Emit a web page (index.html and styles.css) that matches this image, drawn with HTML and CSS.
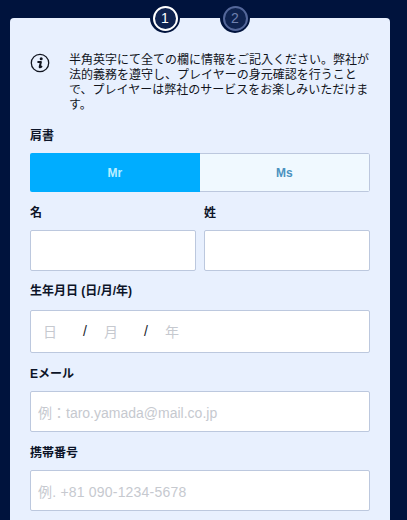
FILE: index.html
```html
<!DOCTYPE html>
<html lang="ja">
<head>
<meta charset="utf-8">
<title>登録</title>
<link rel="stylesheet" href="styles.css">
</head>
<body>
<div class="page">
  <div class="stepper">
    <div class="step step-active"><span class="step-num">1</span></div>
    <div class="step step-idle"><span class="step-num">2</span></div>
  </div>
  <form class="card">
    <div class="notice">
      <svg class="notice-icon" viewBox="0 0 20 20" width="20" height="20" aria-hidden="true">
        <circle cx="10" cy="10" r="8.7" fill="none" stroke="#10141f" stroke-width="1.3"/>
        <circle cx="11.2" cy="5.8" r="1.5" fill="#10141f"/>
        <path d="M8.2 9.1h2.7l-1.2 4.7c-.1.6.4.7 1.7-.2" fill="none" stroke="#10141f" stroke-width="2" stroke-linecap="round" stroke-linejoin="round"/>
      </svg>
      <p class="notice-text">半角英字にて全ての欄に情報をご記入ください。弊社が法的義務を遵守し、プレイヤーの身元確認を行うことで、プレイヤーは弊社のサービスをお楽しみいただけます。</p>
    </div>
    <div class="label label-title">肩書</div>
    <div class="toggle">
      <div class="toggle-btn toggle-on">Mr</div>
      <div class="toggle-btn toggle-off">Ms</div>
    </div>
    <div class="name-row">
      <div class="name-col">
        <div class="label">名</div>
        <div class="field field-name"></div>
      </div>
      <div class="name-col">
        <div class="label">姓</div>
        <div class="field field-name"></div>
      </div>
    </div>
    <div class="label label-dob">生年月日 (日/月/年)</div>
    <div class="field field-dob">
      <span class="dob-part">日</span><span class="dob-sep">/</span>
      <span class="dob-part">月</span><span class="dob-sep">/</span>
      <span class="dob-part">年</span>
    </div>
    <div class="label label-contact">Eメール</div>
    <div class="field field-text">例：taro.yamada@mail.co.jp</div>
    <div class="label label-contact">携帯番号</div>
    <div class="field field-text field-phone">例. +81 090-1234-5678</div>
  </form>
</div>
</body>
</html>
```
FILE: styles.css
```css
* { box-sizing: border-box; }
html, body { margin: 0; height: 100%; }
body {
  background: #00133d;
  font-family: "Liberation Sans", "Noto Sans CJK JP", sans-serif;
  overflow: hidden;
}
.page { width: 380px; margin-left: 10px; padding-top: 3px; }
.stepper {
  display: flex;
  justify-content: center;
  gap: 40px;
  height: 30px;
  position: relative;
  z-index: 1;
}
.step {
  width: 30px;
  height: 30px;
  border-radius: 50%;
  background: #00133d;
  display: flex;
  align-items: center;
  justify-content: center;
}
.step-num {
  width: 25px;
  height: 25px;
  border-radius: 50%;
  display: flex;
  align-items: center;
  justify-content: center;
  font-size: 14px;
  background: #0f2350;
}
.step-active .step-num { border: 2px solid #fff; color: #fff; }
.step-idle .step-num { border: 2px solid #54679a; color: #6f81b0; }
.card {
  margin-top: -15px;
  height: 520px;
  background: #e8f0fe;
  border-radius: 4px;
  padding: 33px 20px 0;
}
.notice { display: flex; align-items: flex-start; }
.notice-icon { flex: none; width: 20px; height: 20px; margin-top: 2px; }
.notice-text {
  margin: 0 0 0 19px;
  font-size: 12px;
  line-height: 15px;
  color: #11141c;
  font-family: "Noto Sans CJK JP", sans-serif;
}
.label {
  font-size: 12px;
  line-height: 16px;
  font-weight: 700;
  color: #0c1428;
}
.label-title { margin-top: 17px; }
.toggle {
  display: flex;
  height: 39px;
  margin-top: 9px;
  border-radius: 2px;
  overflow: hidden;
}
.toggle-btn {
  flex: 1;
  display: flex;
  align-items: center;
  justify-content: center;
  font-size: 12px;
  font-weight: 700;
}
.toggle-on { background: #00adff; color: #b9efff; }
.toggle-off {
  background: #f0f9ff;
  color: #4a92c0;
  border: 1px solid #bcc8de;
  border-left: 0;
  border-radius: 0 2px 2px 0;
}
.name-row { display: flex; gap: 8px; margin-top: 13px; }
.name-col { flex: 1; min-width: 0; }
.field {
  background: #fff;
  border: 1px solid #bcc8de;
  border-radius: 2px;
  display: flex;
  align-items: center;
  padding: 0 7px;
  font-size: 14px;
  color: #c6c9cf;
}
.field-name { height: 41px; margin-top: 9px; }
.label-dob { margin-top: 12px; }
.field-dob {
  height: 43px;
  margin-top: 11px;
  padding-left: 12px;
  padding-bottom: 1px;
}
.dob-part { width: 40px; }
.dob-sep { width: 21px; color: #20242c; }
.label-contact { margin-top: 13px; }
.field-text { height: 41px; margin-top: 9px; }
.field-phone { letter-spacing: 0.2px; }
```
